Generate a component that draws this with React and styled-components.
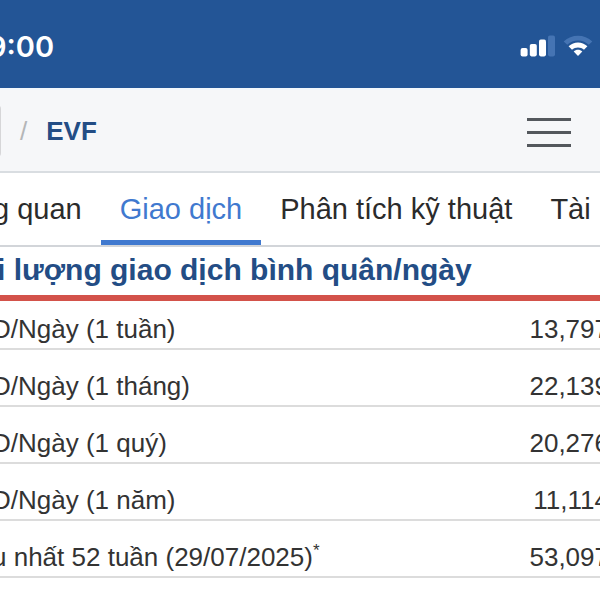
import React from 'react';
import styled, { createGlobalStyle } from 'styled-components';

const GlobalStyle = createGlobalStyle`
  * {
    box-sizing: border-box;
  }

  body {
    margin: 0;
    overflow-x: hidden;
    background: #fff;
    color: #333;
    font-family: 'Liberation Sans', Arial, sans-serif;
  }
`;

const tabs = [
  { label: 'g quan', active: false },
  { label: 'Giao dịch', active: true },
  { label: 'Phân tích kỹ thuật', active: false },
  { label: 'Tài', active: false },
];

const rows = [
  { label: 'D/Ngày (1 tuần)', value: '13,797' },
  { label: 'D/Ngày (1 tháng)', value: '22,139' },
  { label: 'D/Ngày (1 quý)', value: '20,276' },
  { label: 'D/Ngày (1 năm)', value: '11,114' },
  { label: 'u nhất 52 tuần (29/07/2025)', value: '53,097', note: '*' },
];

const SignalIcon = () => (
  <svg width="35" height="22" viewBox="0 0 35 22" aria-hidden="true">
    <rect x="0.6" y="13" width="7" height="8.4" rx="2" fill="#fff" />
    <rect x="9.8" y="9" width="7" height="12.4" rx="1.8" fill="#fff" />
    <rect x="19" y="4.6" width="7" height="16.8" rx="1.8" fill="#fff" />
    <rect x="28" y="0.4" width="7" height="21" rx="1.8" fill="#4574b3" />
  </svg>
);

const WifiIcon = () => (
  <svg width="30" height="22" viewBox="0 0 30 22" aria-hidden="true">
    <path
      d="M0.7 6.4C8.4 -1.2 21.6 -1.2 29.3 6.4L25.8 9.8C19.8 4 10.2 4 4.2 9.8Z"
      fill="#4574b3"
    />
    <path
      d="M5.6 11.3C10.9 6.2 19.1 6.2 24.4 11.3L21 14.7C17.6 11.6 12.4 11.6 9 14.7Z"
      fill="#fff"
    />
    <path d="M10.7 16.5C13.1 14.3 16.9 14.3 19.3 16.5L15 20.9Z" fill="#fff" />
  </svg>
);

const App = () => (
  <Page>
    <GlobalStyle />
    <StatusBar>
      <Time>9:00</Time>
      <StatusIcons>
        <SignalIcon />
        <WifiIcon />
      </StatusIcons>
    </StatusBar>
    <Header>
      <Breadcrumb aria-label="Breadcrumb">
        <HomeButton type="button" aria-label="Home" />
        <Separator>/</Separator>
        <Symbol href="#evf">EVF</Symbol>
      </Breadcrumb>
      <MenuButton type="button" aria-label="Menu">
        <MenuLine />
        <MenuLine />
        <MenuLine />
      </MenuButton>
    </Header>
    <TabBar>
      {tabs.map(({ label, active }) => (
        <Tab key={label} href="#tab" $active={active}>
          {label}
        </Tab>
      ))}
    </TabBar>
    <Title>i lượng giao dịch bình quân/ngày</Title>
    <VolumeTable>
      <tbody>
        {rows.map(({ label, value, note }) => (
          <Row key={label}>
            <Label scope="row">
              {label}
              {note && <Note>{note}</Note>}
            </Label>
            <Value>{value}</Value>
          </Row>
        ))}
      </tbody>
    </VolumeTable>
  </Page>
);
export default App;

const Page = styled.div`
  width: 100%;
  overflow: hidden;
`;

const StatusBar = styled.div`
  display: flex;
  align-items: center;
  justify-content: space-between;
  height: 88px;
  padding: 4px 7px 0 0;
  background: #235596;
  color: #fff;
`;

const Time = styled.time`
  margin-left: -12px;
  padding-top: 2px;
  font-family: Inter, sans-serif;
  font-size: 29px;
  font-weight: 600;
  line-height: 36px;
`;

const StatusIcons = styled.div`
  display: flex;
  align-items: center;
  gap: 8px;
`;

const Header = styled.header`
  display: flex;
  align-items: center;
  justify-content: space-between;
  height: 85px;
  padding-right: 29px;
  background: #f6f7f9;
  border-top: 2px solid #f3f8fc;
  border-bottom: 2px solid #d9dde1;
`;

const Breadcrumb = styled.nav`
  display: flex;
  align-items: center;
  gap: 19px;
  font-size: 26px;
  line-height: 32px;
`;

const HomeButton = styled.button`
  width: 50px;
  height: 52px;
  margin-left: -49px;
  border: 2px solid #d6d6d8;
  border-radius: 4px;
  background: #e3e4e6;
`;

const Separator = styled.span`
  color: #b4b6b8;
`;

const Symbol = styled.a`
  color: #234d85;
  font-weight: 700;
  text-decoration: none;
`;

const MenuButton = styled.button`
  display: flex;
  flex-direction: column;
  gap: 10px;
  width: 44px;
  padding: 4px 0 0;
  border: none;
  background: none;
`;

const MenuLine = styled.span`
  width: 100%;
  height: 3px;
  background: #54585d;
`;

const TabBar = styled.nav`
  display: flex;
  height: 74px;
  margin-left: -26px;
  border-bottom: 2px solid #d2d5d9;
`;

const Tab = styled.a`
  padding: 0 19px;
  border-bottom: 5px solid ${({ $active }) => ($active ? '#4079cf' : 'transparent')};
  color: ${({ $active }) => ($active ? '#4079cf' : '#2b2b2b')};
  font-size: 29px;
  line-height: 72px;
  text-decoration: none;
  white-space: nowrap;
`;

const Title = styled.h1`
  margin: 0;
  padding-bottom: 2px;
  border-bottom: 6px solid #d3524a;
  color: #234d85;
  font-size: 30px;
  font-weight: 700;
  line-height: 46px;
  text-indent: -3px;
  white-space: nowrap;
`;

const VolumeTable = styled.table`
  width: calc(100% + 17px);
  margin-left: -8px;
  border-collapse: separate;
  border-spacing: 0;
  font-size: 26px;
  line-height: 28px;
`;

const Row = styled.tr`
  th,
  td {
    padding: 22px 0 5px;
    border-bottom: 2px solid #dcdcdc;
    vertical-align: bottom;
  }

  &:first-child th,
  &:first-child td {
    padding-top: 14px;
  }
`;

const Label = styled.th`
  font-weight: 400;
  text-align: left;
  white-space: nowrap;
`;

const Value = styled.td`
  text-align: right;
`;

const Note = styled.sup`
  font-size: 17px;
  line-height: 0;
`;
